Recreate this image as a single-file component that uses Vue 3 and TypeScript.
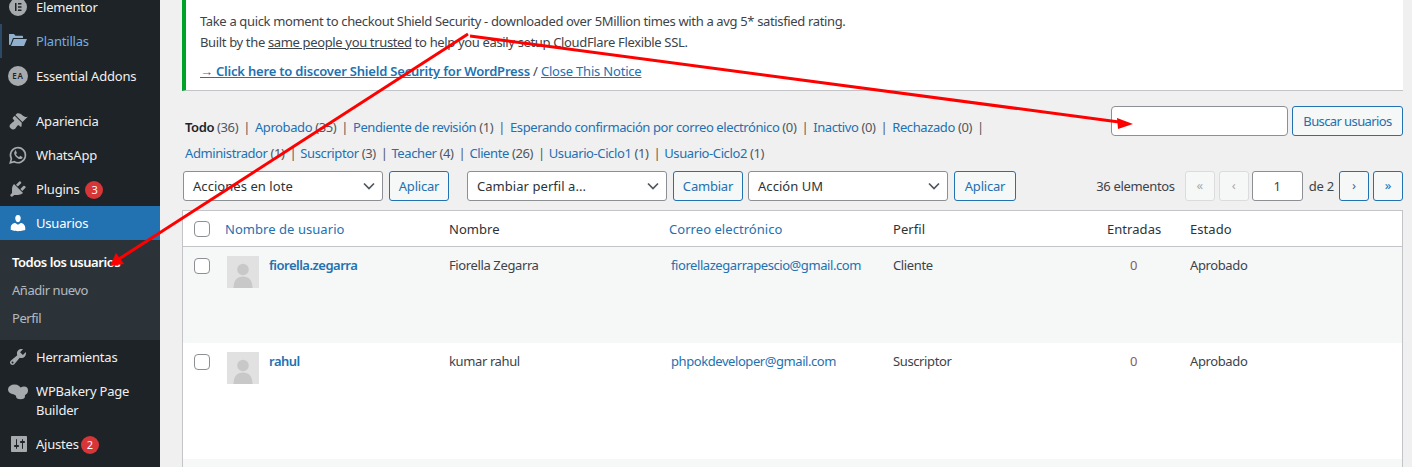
<script setup lang="ts">
const filtersOne = [
  { label: 'Todo', count: '(36)', current: true },
  { label: 'Aprobado', count: '(35)' },
  { label: 'Pendiente de revisión', count: '(1)' },
  { label: 'Esperando confirmación por correo electrónico', count: '(0)' },
  { label: 'Inactivo', count: '(0)' },
  { label: 'Rechazado', count: '(0)' },
]
const filtersTwo = [
  { label: 'Administrador', count: '(1)' },
  { label: 'Suscriptor', count: '(3)' },
  { label: 'Teacher', count: '(4)' },
  { label: 'Cliente', count: '(26)' },
  { label: 'Usuario-Ciclo1', count: '(1)' },
  { label: 'Usuario-Ciclo2', count: '(1)' },
]
const users = [
  { login: 'fiorella.zegarra', name: 'Fiorella Zegarra', mail: 'fiorellazegarrapescio@gmail.com', role: 'Cliente', cls: 'alt' },
  { login: 'rahul', name: 'kumar rahul', mail: 'phpokdeveloper@gmail.com', role: 'Suscriptor', cls: 'tall' },
]
</script>

<template>
  <div class="page">
    <aside class="side">
      <ul class="menu">
        <li class="item">
          <span class="ico"><svg width="20" height="20" viewBox="0 0 20 20"><path fill="#a7aaad" fill-rule="evenodd" d="M10 1a9 9 0 1 0 0 18 9 9 0 0 0 0-18zM7 6h1.500v8H7zm3 0h3.500v1.500H10zm0 3.200h3.500v1.500H10zm0 3.300h3.500V14H10z"/></svg></span>
          <span>Elementor</span>
        </li>
        <li class="item active-link">
          <span class="ico"><svg width="20" height="20" viewBox="0 0 20 20"><path fill="#8fb0cf" d="M1 3h5l1.500 1.800h6.500c.6 0 1 .4 1 1V7H5L2.300 14H2c-.6 0-1-.4-1-1z"/><path fill="#8fb0cf" d="M5.800 8H19l-3 7H3z"/></svg></span>
          <span>Plantillas</span>
        </li>
        <li class="item ea">
          <span class="ico"><span class="ea-badge">EA</span></span>
          <span>Essential Addons</span>
        </li>
        <li class="item sep">
          <span class="ico"><svg width="20" height="20" viewBox="0 0 20 20"><path fill="#a7aaad" d="M14.480 11.060L7.410 3.990l1.500-1.500c.5-.56 2.300-.47 3.510.32 1.210.8 1.430 1.280 2.910 2.100 1.180.64 2.450 1.260 4.450.85zm-.71.71L6.700 4.700 4.930 6.470c-.39.39-.39 1.020 0 1.410l1.060 1.060c.39.39.39 1.030 0 1.420-.6.6-1.430 1.110-2.210 1.690-.35.26-.7.530-1.010.84C1.430 13.710.96 15.650 2.650 17.350s3.640 1.220 4.470.38c.31-.31.58-.65.84-1 .57-.78 1.080-1.610 1.690-2.220.39-.39 1.020-.39 1.410 0l1.060 1.060c.39.39 1.020.39 1.410 0z"/></svg></span>
          <span>Apariencia</span>
        </li>
        <li class="item">
          <span class="ico"><svg width="20" height="20" viewBox="0 0 20 20"><path fill="none" stroke="#a7aaad" stroke-width="1.600" d="M2.300 17.800l1.100-4A7.500 7.500 0 1 1 6.300 16.700z"/><path fill="#a7aaad" d="M7.300 5.900c-.5.300-1.200 1.100-1.100 2.300.2 2.500 3.300 5.700 5.900 5.900 1.200.1 2-.6 2.300-1.200.2-.4.2-.9.100-1l-2-1c-.2-.1-.4 0-.5.100l-.7.9c-.1.100-.3.200-.5.100-1-.4-2.200-1.500-2.700-2.500-.1-.2 0-.3.100-.5l.6-.7c.1-.1.100-.3.100-.4l-.9-2.100c-.2-.4-.7-.5-1.100-.4z"/></svg></span>
          <span>WhatsApp</span>
        </li>
        <li class="item">
          <span class="ico"><svg width="20" height="20" viewBox="0 0 20 20"><path fill="#a7aaad" d="M13.110 4.360L9.870 7.600 8 5.730l3.240-3.240c.35-.34 1.050-.2 1.560.32.52.51.66 1.210.31 1.550zm-8 1.770l.91-1.120 9.010 9.010-1.190.84c-.71.71-2.630 1.160-3.820 1.160H6.140L4.900 17.260c-.59.59-1.540.59-2.120 0-.59-.58-.59-1.530 0-2.120l1.240-1.240v-3.880c0-1.130.4-3.190 1.090-3.890zm7.260 3.970l3.240-3.240c.34-.35 1.040-.21 1.550.31.52.51.66 1.210.31 1.550l-3.240 3.250z"/></svg></span>
          <span>Plugins</span><span class="count">3</span>
        </li>
        <li class="item current">
          <span class="ico"><svg width="20" height="20" viewBox="0 0 20 20"><path fill="#fff" d="M10 9.250c-2.270 0-2.730-3.440-2.730-3.440C7 4.020 7.820 2 9.970 2c2.160 0 2.980 2.020 2.710 3.810 0 0-.41 3.440-2.680 3.440zm0 2.570L12.720 10c2.390 0 4.520 2.330 4.520 4.530v2.490s-3.650 1.130-7.240 1.130c-3.650 0-7.240-1.130-7.240-1.130v-2.490c0-2.250 1.940-4.480 4.470-4.480z"/></svg></span>
          <span>Usuarios</span>
        </li>
        <li class="sub">
          <div class="sub-item strong">Todos los usuarios</div>
          <div class="sub-item">Añadir nuevo</div>
          <div class="sub-item">Perfil</div>
        </li>
        <li class="item">
          <span class="ico"><svg width="20" height="20" viewBox="0 0 20 20"><path fill="#a7aaad" d="M16.680 9.770c-1.340 1.340-3.300 1.670-4.950.99l-5.410 6.520c-.99.99-2.590.99-3.580 0s-.99-2.590 0-3.570l6.520-5.420c-.68-1.650-.35-3.610.99-4.950 1.280-1.280 3.120-1.620 4.720-1.060l-2.890 2.890 2.820 2.820 2.860-2.870c.53 1.580.18 3.390-1.080 4.650zM3.810 16.210c.4.39 1.040.39 1.430 0 .4-.4.4-1.040 0-1.430-.39-.4-1.030-.4-1.430 0-.39.39-.39 1.030 0 1.430z"/></svg></span>
          <span>Herramientas</span>
        </li>
        <li class="item two">
          <span class="ico"><svg width="20" height="20" viewBox="0 0 20 20"><g fill="#a7aaad"><ellipse cx="6.500" cy="8.500" rx="6.500" ry="5"/><ellipse cx="12" cy="11" rx="7" ry="4.500"/><circle cx="16" cy="9.500" r="4"/><ellipse cx="12.500" cy="15" rx="4.500" ry="3.200"/></g></svg></span>
          <span>WPBakery Page Builder</span>
        </li>
        <li class="item">
          <span class="ico"><svg class="nudge" width="20" height="20" viewBox="0 0 20 20"><path fill="#a7aaad" d="M18 17V3c0-.6-.4-1-1-1H3c-.6 0-1 .4-1 1v14c0 .6.4 1 1 1h14c.6 0 1-.4 1-1zM8 11h1c.55 0 1 .45 1 1s-.45 1-1 1H8v1.500c0 .28-.22.5-.5.5s-.5-.22-.5-.5V13H6c-.55 0-1-.45-1-1s.45-1 1-1h1V5.500c0-.28.22-.5.5-.5s.5.22.5.5V11zm5-2h-1c-.55 0-1-.45-1-1s.45-1 1-1h1V5.500c0-.28.22-.5.5-.5s.5.22.5.5V7h1c.55 0 1 .45 1 1s-.45 1-1 1h-1v5.500c0 .28-.22.5-.5.5s-.5-.22-.5-.5V9z"/></svg></span>
          <span>Ajustes</span><span class="count tight">2</span>
        </li>
      </ul>
    </aside>

    <main class="content">
      <section class="notice">
        <p class="tx">Take a quick moment to checkout Shield Security - downloaded over 5Million times with a avg 5* satisfied rating.</p>
        <p class="tx">Built by the <u>same people you trusted</u> to help you easily setup CloudFlare Flexible SSL.</p>
        <p class="cta"><a class="b">→ Click here to discover Shield Security for WordPress</a> / <a>Close This Notice</a></p>
      </section>

      <section class="filter-zone">
        <div class="filters">
          <div class="flt-line first">
            <template v-for="f in filtersOne" :key="f.label">
              <span class="flt"><a :class="{ now: f.current }">{{ f.label }}</a> <span>{{ f.count }}</span></span><span class="bar">|</span>
            </template>
          </div>
          <div class="flt-line">
            <template v-for="(f, i) in filtersTwo" :key="f.label">
              <span class="flt"><a>{{ f.label }}</a> <span>{{ f.count }}</span></span><span v-if="i < filtersTwo.length - 1" class="bar">|</span>
            </template>
          </div>
        </div>
        <div class="search">
          <input class="search-input" type="text" aria-label="Buscar" />
          <button class="btn wide">Buscar usuarios</button>
        </div>
      </section>

      <section class="toolbar">
        <div class="sel">Acciones en lote<svg width="12" height="8" viewBox="0 0 12 8"><path fill="none" stroke="#50575e" stroke-width="1.700" d="M1 1.500l5 5 5-5"/></svg></div>
        <button class="btn apply">Aplicar</button>
        <div class="sel gap">Cambiar perfil a...<svg width="12" height="8" viewBox="0 0 12 8"><path fill="none" stroke="#50575e" stroke-width="1.700" d="M1 1.500l5 5 5-5"/></svg></div>
        <button class="btn change">Cambiar</button>
        <div class="sel gap-s">Acción UM<svg width="12" height="8" viewBox="0 0 12 8"><path fill="none" stroke="#50575e" stroke-width="1.700" d="M1 1.500l5 5 5-5"/></svg></div>
        <button class="btn apply2">Aplicar</button>
        <div class="pager">
          <span class="total">36 elementos</span>
          <span class="pg off">«</span>
          <span class="pg off">‹</span>
          <span class="cur">1</span>
          <span class="of">de 2</span>
          <span class="pg">›</span>
          <span class="pg">»</span>
        </div>
      </section>

      <section class="table">
        <div class="row head">
          <span class="cb-cell"><span class="cb"></span></span>
          <a>Nombre de usuario</a>
          <span>Nombre</span>
          <a>Correo electrónico</a>
          <span>Perfil</span>
          <span>Entradas</span>
          <span>Estado</span>
        </div>
        <div v-for="u in users" :key="u.login" class="row body" :class="u.cls">
          <span class="cb-cell"><span class="cb"></span></span>
          <span class="user">
            <span class="avatar"><svg width="32" height="32" viewBox="0 0 32 32"><rect width="32" height="32" fill="#e1e1e1"/><circle cx="16" cy="13.500" r="5.800" fill="#c8c8c8"/><path fill="#c8c8c8" d="M6.500 32c0-8 4-11.500 9.500-11.500S25.500 24 25.500 32z"/></svg></span>
            <a class="b login">{{ u.login }}</a>
          </span>
          <span>{{ u.name }}</span>
          <a class="mail">{{ u.mail }}</a>
          <span>{{ u.role }}</span>
          <span class="posts">0</span>
          <span>Aprobado</span>
        </div>
        <div class="row body alt rest"></div>
      </section>
    </main>

    <svg class="arrows" width="1412" height="467" viewBox="0 0 1412 467">
      <g stroke="#f00" stroke-width="3" fill="none">
        <path d="M468 34L119 259"/>
        <path d="M470 36L1119 122"/>
      </g>
      <path fill="#f00" d="M110 266L116 253L124 264z"/>
      <path fill="#f00" d="M1133 124L1117 118L1118 129z"/>
    </svg>
  </div>
</template>

<style>
html, body { margin: 0; background: #f0f0f1; }
</style>

<style scoped>
.page {
  position: relative;
  display: flex;
  width: 1412px;
  height: 467px;
  overflow: hidden;
  background: #f0f0f1;
  color: #3c434a;
  font: 13px/19px "Noto Sans", "Open Sans", sans-serif;
  letter-spacing: -0.2px;
}
a { color: #2271b1; }
p { margin: 0; }
.b { font-weight: 600; }
.side { flex: 0 0 160px; background: #1d2327; color: #f0f0f1; }
.menu { list-style: none; margin: -10px 0 0; padding: 0; }
.item {
  box-sizing: border-box;
  display: flex;
  align-items: flex-start;
  min-height: 34px;
  padding: 8px 8px 7px 0;
}
.ico { flex: 0 0 36px; display: flex; justify-content: center; margin-top: -1px; }
.nudge { transform: translateX(1px); }
.ea { min-height: 35px; padding-top: 9px; }
.sep { margin-top: 11px; }
.ea-badge {
  width: 20px; height: 20px; border-radius: 50%;
  background: #a7aaad; color: #1d2327;
  font-size: 8px; font-weight: 600; line-height: 20px; text-align: center;
  letter-spacing: .8px;
}
.active-link { color: #72aee6; box-shadow: inset 2px 0 #2b4a68; }
.current { background: #2271b1; color: #fff; }
.count {
  display: inline-block;
  width: 18px; height: 18px; margin: 1px 0 0 6px;
  border-radius: 50%;
  background: #d63638; color: #fff;
  font-size: 11px; line-height: 18px; text-align: center;
}
.count.tight { margin-left: 2px; }
.sub { background: #2c3338; height: 100px; padding-top: 8px; box-sizing: border-box; letter-spacing: -0.45px; }
.sub-item { padding: 0 12px; height: 28px; line-height: 28px; color: rgba(240, 246, 252, .7); }
.sub-item.strong { color: #fff; font-weight: 600; }
.two { min-height: 53px; }
.content { flex: 1; padding: 0 9px 0 23px; min-width: 0; }
.notice {
  box-sizing: border-box;
  height: 91px;
  margin-left: -1px;
  padding: 11px 12px 0 14px;
  background: #fff;
  border-left: 4px solid #00a32a;
  border-bottom: 1px solid #c3c4c7;
  line-height: 21px;
}
.tx { letter-spacing: -0.35px; }
.cta { margin-top: 8px; }
.cta a { text-decoration: underline; }
.filter-zone { display: flex; justify-content: space-between; align-items: flex-start; margin-top: 15px; height: 65px; }
.filters { padding: 9px 0 0 2px; line-height: 25px; color: #50575e; letter-spacing: -0.4px; }
.flt-line { display: flex; height: 25.500px; white-space: nowrap; }
.bar { margin: 0 4px 0 5px; color: #50575e; }
.first .bar { margin-right: 5px; }
.now { color: #1d2327; font-weight: 600; }
.search { display: flex; gap: 4px; }
.search-input {
  box-sizing: border-box;
  width: 177px; height: 30px; padding: 0 8px;
  border: 1px solid #8c8f94; border-radius: 4px; background: #fff;
}
.btn {
  box-sizing: border-box;
  height: 30px; padding: 0;
  border: 1px solid #2271b1; border-radius: 3px;
  background: #f6f7f7; color: #2271b1;
  font: inherit; letter-spacing: inherit;
}
.wide { width: 111px; letter-spacing: -0.6px; }
.toolbar { display: flex; align-items: center; height: 30px; }
.sel {
  box-sizing: border-box;
  display: flex; align-items: center; justify-content: space-between;
  width: 200px; height: 30px; padding: 0 7px 0 9px;
  border: 1px solid #8c8f94; border-radius: 3px; background: #fff; color: #2c3338;
  letter-spacing: 0.05px;
}
.apply { width: 60px; margin-left: 6px; }
.gap { margin-left: 18px; }
.change { width: 70px; margin-left: 6px; }
.gap-s { margin-left: 5px; }
.apply2 { width: 62px; margin-left: 6px; }
.pager { margin-left: auto; display: flex; align-items: center; }
.total { margin-right: 10px; letter-spacing: -0.35px; }
.pg {
  box-sizing: border-box;
  width: 30px; height: 30px;
  border: 1px solid #2271b1; border-radius: 3px;
  background: #f6f7f7; color: #2271b1;
  font-size: 13px; line-height: 26px; text-align: center;
}
.pg.off { margin-right: 4px; border-color: #dcdcde; color: #a7aaad; }
.pg.off + .cur { margin-left: -1px; }
.pg + .pg:not(.off) { margin-left: 4px; }
.cur {
  box-sizing: border-box;
  width: 51px; height: 30px;
  border: 1px solid #8c8f94; border-radius: 3px; background: #fff;
  line-height: 28px; text-align: center;
}
.of { margin: 0 5px 0 6px; }
.table {
  margin: 9px 0 0 -1px;
  height: 300px;
  box-sizing: border-box;
  background: #fff;
  border: 1px solid #c3c4c7;
}
.row {
  display: grid;
  grid-template-columns: 42px 224px 220px 224px 214px 83px 1fr;
  letter-spacing: -0.38px;
}
.head {
  height: 36px;
  padding-top: 2px;
  align-items: center;
  border-bottom: 1px solid #c3c4c7;
  box-sizing: border-box;
  color: #2c3338;
  letter-spacing: 0.05px;
}
.head .cb-cell { margin-top: -1px; }
.body { padding-top: 9px; box-sizing: border-box; height: 96px; }
.alt { background: #f6f7f7; }
.tall { height: 116px; }
.rest { height: 60px; }
.cb-cell { display: flex; padding-left: 11px; }
.cb {
  box-sizing: border-box;
  display: block;
  width: 16px; height: 16px;
  background: #fff;
  border: 1px solid #8c8f94; border-radius: 4px;
}
.body .cb { margin-top: 2px; }
.user { display: flex; gap: 10px; }
.avatar { display: block; width: 32px; height: 32px; margin-left: 2px; }
.avatar svg { display: block; }
.login { letter-spacing: -0.5px; }
.mail { margin-left: 2px; letter-spacing: -0.43px; }
.posts { color: #8b5a5e; padding-left: 23px; }
.arrows { position: absolute; left: 0; top: 0; pointer-events: none; }
</style>
